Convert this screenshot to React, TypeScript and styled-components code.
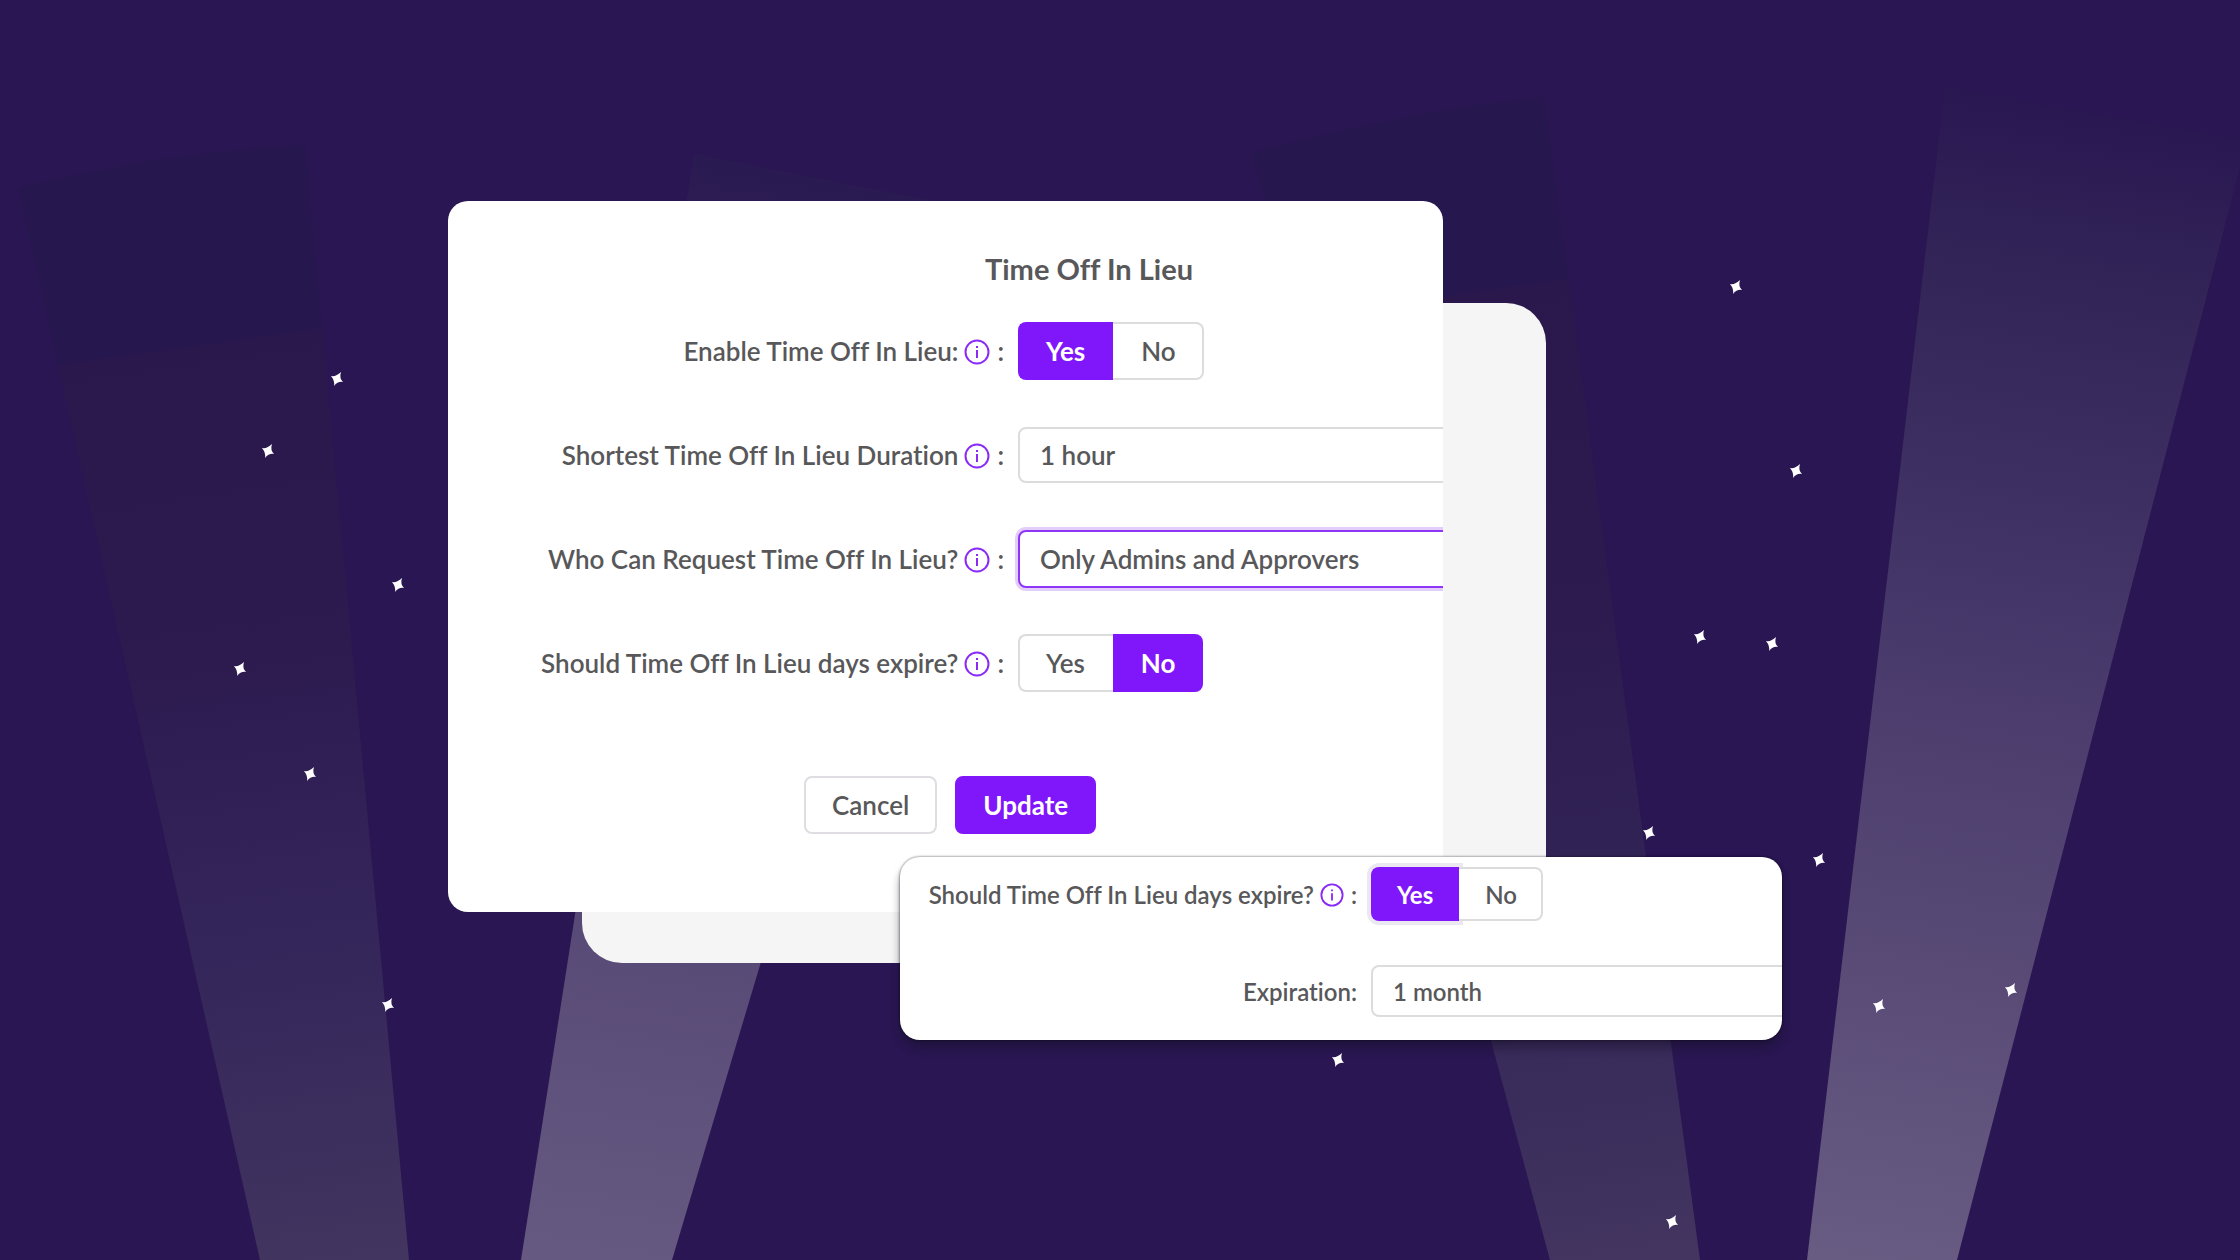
import React, { useState } from "react";
import styled, { createGlobalStyle, css } from "styled-components";

const GlobalStyle = createGlobalStyle`
  *, *::before, *::after { box-sizing: border-box; }
  body {
    margin: 0;
    background: #291652;
    color: #58585a;
    font-family: Lato, "Open Sans", sans-serif;
    font-variant-ligatures: none;
  }
`;

const Page = styled.main`
  position: relative;
  min-height: 100vh;
  padding: 201px 20vw;
  overflow: hidden;
`;

const Backdrop = styled.svg`
  position: absolute;
  inset: 0;
  width: 100%;
  height: 100%;
`;

const Stage = styled.div`
  position: relative;
`;

const Backing = styled.div`
  position: absolute;
  top: 102px;
  bottom: -51px;
  left: 10%;
  right: 246px;
  border-radius: 40px;
  background: #f5f5f5;
`;

const Card = styled.section`
  position: relative;
  width: 74%;
  overflow: hidden;
  border-radius: 20px;
  background: #fff;
`;

const Form = styled.form`
  min-width: 1282px;
  padding: 50px 0 78px;
`;

const Title = styled.h1`
  margin: 0 0 35px;
  text-align: center;
  font-size: 29px;
  line-height: 36px;
  font-weight: 700;
`;

const Rows = styled.div`
  display: flex;
  flex-direction: column;
  gap: 46px;
`;

const Row = styled.div<{ $compact?: boolean }>`
  display: flex;
  align-items: center;
  height: ${(p) => (p.$compact ? 54 : 58)}px;
  font-size: ${(p) => (p.$compact ? 24 : 26)}px;
  font-weight: 600;
`;

const LabelCell = styled.div<{ $compact?: boolean }>`
  display: flex;
  flex: none;
  justify-content: flex-end;
  align-items: center;
  width: ${(p) => (p.$compact ? 471 : 570)}px;
  padding-right: 14px;
`;

const InfoIcon = styled.svg<{ $compact?: boolean }>`
  flex: none;
  width: ${(p) => (p.$compact ? 24 : 26)}px;
  height: ${(p) => (p.$compact ? 24 : 26)}px;
  margin: 2px 7px 0 6px;
`;

const Group = styled.div`
  display: flex;
  height: 100%;
`;

const Choice = styled.button<{ $on: boolean; $compact?: boolean; $halo?: boolean }>`
  height: 100%;
  padding: 0 ${(p) => (p.$compact ? 24 : 26)}px;
  border: 2px solid #dcdcde;
  background: #fff;
  color: inherit;
  font: inherit;
  &:first-child { border-radius: 8px 0 0 8px; border-right-width: 0; padding-right: ${(p) => (p.$compact ? 26 : 28)}px; }
  &:last-child { border-radius: 0 8px 8px 0; border-left-width: 0; padding-left: ${(p) => (p.$compact ? 26 : 28)}px; }
  ${(p) => p.$on && css`
    border-color: #8017fb;
    background: #8017fb;
    color: #fff;
    font-weight: 700;
  `}
  ${(p) => p.$halo && css`box-shadow: 0 0 0 4px #ebe8f1;`}
`;

const Select = styled.select<{ $active?: boolean; $compact?: boolean }>`
  appearance: none;
  flex: 1;
  height: ${(p) => (p.$compact ? 52 : p.$active ? 58 : 56)}px;
  padding: 0 20px;
  border: 2px solid #dcdcde;
  border-radius: 8px;
  background: #fff;
  color: inherit;
  font: inherit;
  ${(p) => p.$active && css`
    border-color: #8f35f6;
    box-shadow: 0 0 0 3px #e3cdfb;
  `}
`;

const Actions = styled.div`
  display: flex;
  gap: 18px;
  margin: 84px 0 0 356px;
`;

const Action = styled.button<{ $primary?: boolean }>`
  height: 58px;
  padding: 0 26px;
  border: 2px solid ${(p) => (p.$primary ? "#8017fb" : "#dfdde2")};
  border-radius: 8px;
  background: ${(p) => (p.$primary ? "#8017fb" : "#fff")};
  color: ${(p) => (p.$primary ? "#fff" : "inherit")};
  font: inherit;
  font-size: 26px;
  font-weight: ${(p) => (p.$primary ? 700 : 600)};
`;

const Popover = styled.section`
  position: absolute;
  top: 656px;
  left: 452px;
  right: 10px;
  border-radius: 20px;
  background: #fff;
  box-shadow: 0 0 2px 1px rgba(0, 0, 0, 0.3), 0 8px 8px rgba(22, 18, 40, 0.45);
`;

const PopoverBody = styled.div`
  display: flex;
  flex-direction: column;
  gap: 43px;
  overflow: hidden;
  border-radius: 20px;
  padding: 10px 0 22px;
  & > div { width: calc(100% + 20px); }
`;

const beams = [
  { id: "b1", d: "M18 188Q160 152 305 145L409 1260H260Z", y1: 145, y2: 1260, turn: "rotate(-8 305 145)",
    stops: [[0, "#26174f"], [0.165, "#26174f"], [0.165, "#2a184d"], [0.45, "#2d1b50"], [0.7, "#34255a"], [1, "#42355f"]] },
  { id: "b2", d: "M694 154L985 211L672 1260H521Z", y1: 154, y2: 1260, turn: "rotate(9 694 154)",
    stops: [[0, "#2a1a52"], [0.35, "#3a2b5d"], [0.7, "#584a76"], [1, "#655981"]] },
  { id: "b3", d: "M1252 153Q1400 112 1544 97L1700 1260H1550Z", y1: 97, y2: 1260, turn: "rotate(-8 1544 97)",
    stops: [[0, "#26174f"], [0.158, "#26174f"], [0.158, "#2a184d"], [0.45, "#2d1b50"], [0.7, "#322456"], [1, "#433560"]] },
  { id: "b4", d: "M1945 87L2247 140L1957 1260H1807Z", y1: 87, y2: 1260, turn: "rotate(9 1945 87)",
    stops: [[0, "#291752"], [0.14, "#322457"], [0.32, "#3e2f62"], [0.48, "#493a6c"], [0.75, "#594b76"], [1, "#685c83"]] },
] as const;

const stars = [
  [337, 379], [268, 451], [398, 585], [240, 669], [310, 774], [388, 1005],
  [1736, 287], [1796, 471], [1700, 637], [1772, 644], [1649, 833], [1819, 860],
  [1879, 1006], [2011, 990], [1338, 1060], [1672, 1222],
];

function Sky() {
  return (
    <Backdrop viewBox="0 0 2240 1260" preserveAspectRatio="xMidYMax slice" aria-hidden="true">
      <defs>
        {beams.map((b) => (
          <linearGradient key={b.id} id={b.id} gradientUnits="userSpaceOnUse" x1="0" x2="0" y1={b.y1} y2={b.y2}
            gradientTransform={b.turn}>
            {b.stops.map(([o, c], i) => <stop key={i} offset={o} stopColor={c} />)}
          </linearGradient>
        ))}
      </defs>
      {beams.map((b) => <path key={b.id} d={b.d} fill={`url(#${b.id})`} />)}
      {stars.map(([x, y]) => (
        <path key={`${x}-${y}`} transform={`translate(${x} ${y})`} fill="#fff"
          d="M-6 -3Q-1 -2 4 -7Q2 -1 6 3Q1 2 -3 7Q-2 2 -6 -3Z" />
      ))}
    </Backdrop>
  );
}

function Info({ compact }: { compact?: boolean }) {
  return (
    <InfoIcon $compact={compact} viewBox="0 0 26 26" fill="none" stroke="#8a2bf5" strokeWidth="2" aria-hidden="true">
      <circle cx="13" cy="13" r="11.500" />
      <path d="M13 11V19" />
      <path d="M13 7V9" />
    </InfoIcon>
  );
}

function YesNo({ label, initial, compact, halo }: { label: string; initial: string; compact?: boolean; halo?: boolean }) {
  const [value, setValue] = useState(initial);
  return (
    <Group role="group" aria-labelledby={label}>
      {["Yes", "No"].map((v) => (
        <Choice key={v} type="button" $on={value === v} $compact={compact} $halo={halo && value === v}
          aria-pressed={value === v} onClick={() => setValue(v)}>{v}</Choice>
      ))}
    </Group>
  );
}

export default function App() {
  return (
    <>
      <GlobalStyle />
      <Page>
        <Sky />
        <Stage>
          <Backing />
          <Card>
            <Form onSubmit={(e) => e.preventDefault()}>
              <Title>Time Off In Lieu</Title>
              <Rows>
                <Row>
                  <LabelCell><span id="enable">Enable Time Off In Lieu:</span><Info />:</LabelCell>
                  <YesNo label="enable" initial="Yes" />
                </Row>
                <Row>
                  <LabelCell><label htmlFor="shortest">Shortest Time Off In Lieu Duration</label><Info />:</LabelCell>
                  <Select id="shortest"><option>1 hour</option></Select>
                </Row>
                <Row>
                  <LabelCell><label htmlFor="who">Who Can Request Time Off In Lieu?</label><Info />:</LabelCell>
                  <Select id="who" $active><option>Only Admins and Approvers</option></Select>
                </Row>
                <Row>
                  <LabelCell><span id="expire">Should Time Off In Lieu days expire?</span><Info />:</LabelCell>
                  <YesNo label="expire" initial="No" />
                </Row>
              </Rows>
              <Actions>
                <Action type="button">Cancel</Action>
                <Action type="submit" $primary>Update</Action>
              </Actions>
            </Form>
          </Card>
          <Popover>
            <PopoverBody>
              <Row $compact>
                <LabelCell $compact><span id="expire-on">Should Time Off In Lieu days expire?</span><Info compact />:</LabelCell>
                <YesNo label="expire-on" initial="Yes" compact halo />
              </Row>
              <Row $compact>
                <LabelCell $compact><label htmlFor="expiration">Expiration:</label></LabelCell>
                <Select id="expiration" $compact><option>1 month</option></Select>
              </Row>
            </PopoverBody>
          </Popover>
        </Stage>
      </Page>
    </>
  );
}
